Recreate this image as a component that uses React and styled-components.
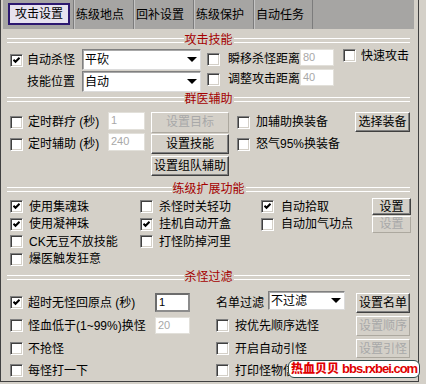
import styled, { createGlobalStyle } from 'styled-components'

const GlobalStyle = createGlobalStyle`
  body {
    margin: 0;
    background: #d4d0c8;
    font-family: 'Liberation Sans', 'Noto Sans CJK SC', sans-serif;
    font-size: 12px;
    line-height: 14px;
    color: #000;
  }
`

const Frame = styled.div`
  position: relative;
  box-sizing: border-box;
  width: 419px;
  height: 382px;
  border: 1px solid #404040;
  border-top: none;
  display: flex;
  flex-direction: column;
`

const TabBar = styled.div`
  display: flex;
  height: 29px;
  margin: 0 4px 0 2px;
  padding-left: 5px;
  background: #a6a5a3;
`

const ActiveTab = styled.div`
  box-sizing: border-box;
  width: 62px;
  height: 22px;
  margin: 3px 3px 0 0;
  border: 2px solid #2c1870;
  background: #e6e2ef;
  display: flex;
  align-items: center;
  justify-content: center;
`

const Tab = styled.div`
  box-sizing: border-box;
  width: 60px;
  padding-left: 2px;
  border-left: 1px solid #7c7c7c;
  box-shadow: inset 1px 0 #c4c4c4;
  display: flex;
  align-items: center;
  white-space: nowrap;

  &:last-child {
    border-right: 1px solid #7c7c7c;
  }
`

const Body = styled.div`
  display: flex;
  flex-direction: column;
  padding: 0 8px 0 6px;
`

const Header = styled.div`
  display: flex;
  align-items: center;
  height: 14px;
  margin-top: ${(p) => p.$mt || 0}px;
  color: #a40000;

  span {
    padding: 0 1px;
    white-space: nowrap;
  }
`

const HeaderLine = styled.div`
  flex: 1;
  box-sizing: border-box;
  height: 5px;
  border-top: 1px solid #fff;
  border-bottom: 1px solid #fff;
`

const Split = styled.div`
  display: flex;
  margin-top: ${(p) => p.$mt || 0}px;
`

const FieldGrid = styled.div`
  display: grid;
  grid-template-columns: ${(p) => p.$cols};
  grid-template-rows: ${(p) => p.$rows};
  align-items: center;
  margin-top: ${(p) => p.$mt || 0}px;
`

const Label = styled.span`
  white-space: nowrap;
  align-self: ${(p) => p.$self || 'center'};
  grid-column: span ${(p) => p.$span || 1};
`

const Box = styled.span`
  box-sizing: border-box;
  flex: none;
  width: 13px;
  height: 13px;
  margin-left: ${(p) => p.$ml || 0}px;
  align-self: ${(p) => p.$self || 'center'};
  background: #fff;
  border: 1px solid;
  border-color: #808080 #fff #fff #808080;
  box-shadow: inset 1px 1px #404040, inset -1px -1px #d4d0c8;
  display: flex;
  align-items: center;
  justify-content: center;
`

const Item = styled.span`
  display: flex;
  align-items: center;
  gap: ${(p) => p.$gap ?? 5}px;
  margin-left: ${(p) => p.$ml || 0}px;
  grid-column: span ${(p) => p.$span || 1};
  white-space: nowrap;
`

const SelectBox = styled.div`
  box-sizing: border-box;
  width: ${(p) => p.$w}px;
  height: ${(p) => p.$h}px;
  align-self: start;
  background: #fff;
  border: 1px solid;
  border-color: #808080 #dcdcdc #dcdcdc #808080;
  box-shadow: inset 1px 1px #a8a8a8;
  padding: 0 3px 0 2px;
  display: flex;
  align-items: center;
  justify-content: space-between;
  white-space: nowrap;
`

const NumInput = styled.div`
  box-sizing: border-box;
  width: ${(p) => p.$w}px;
  height: ${(p) => p.$h}px;
  align-self: ${(p) => p.$self || 'center'};
  margin-top: ${(p) => p.$mt || 0}px;
  padding: 1px 2px 0;
  background: #fff;
  font-size: 11px;
  line-height: 13px;
  color: ${(p) => (p.$off ? '#a8a8a8' : '#000')};
  border: ${(p) => (p.$off ? '1px solid #e2e0da' : '2px solid')};
  border-color: ${(p) => (p.$off ? '#e2e0da' : '#6c6c6c #8c8c8c #8c8c8c #6c6c6c')};
`

const Button = styled.button`
  box-sizing: border-box;
  width: ${(p) => p.$w}px;
  height: ${(p) => p.$h}px;
  padding: 0;
  font: inherit;
  color: #000;
  background: #d4d0c8;
  border: 1px solid;
  border-color: #fff #404040 #404040 #fff;
  box-shadow: inset -1px -1px #808080;
  white-space: nowrap;
  display: flex;
  align-items: center;
  justify-content: center;

  &:disabled {
    color: #a8a8a8;
    border-color: #fff #aca89f #aca89f #fff;
    box-shadow: none;
  }
`

const Watermark = styled.div`
  position: absolute;
  left: 287px;
  top: 360px;
  box-sizing: border-box;
  width: 132px;
  height: 18px;
  padding-left: 2px;
  background: #fff;
  border: 1px solid #2d4b4b;
  border-radius: 6px;
  display: flex;
  align-items: center;
  gap: 3px;
  color: #e00000;
  font-weight: bold;
  white-space: nowrap;

  b:last-child {
    font-size: 13px;
    letter-spacing: -1px;
  }
`

function Check({ checked, ml, self }) {
  return (
    <Box $ml={ml} $self={self}>
      {checked && (
        <svg width="7" height="7" viewBox="0 0 7 7">
          <polyline points="0.5,2.8 2.5,4.8 6.5,0.8" fill="none" stroke="#000" strokeWidth="2" />
        </svg>
      )}
    </Box>
  )
}

function CheckItem({ checked, ml, gap, span, children }) {
  return (
    <Item $ml={ml} $gap={gap} $span={span}>
      <Check checked={checked} />
      {children}
    </Item>
  )
}

function Select({ w, h, children }) {
  return (
    <SelectBox $w={w} $h={h}>
      <span>{children}</span>
      <svg width="10" height="5" viewBox="0 0 10 5">
        <polygon points="0,0 10,0 5,5" fill="#000" />
      </svg>
    </SelectBox>
  )
}

function SectionTitle({ mt, children }) {
  return (
    <Header $mt={mt}>
      <HeaderLine />
      <span>{children}</span>
      <HeaderLine />
    </Header>
  )
}

export default function App() {
  return (
    <>
      <GlobalStyle />
      <Frame>
        <TabBar>
          <ActiveTab>攻击设置</ActiveTab>
          <Tab>练级地点</Tab>
          <Tab>回补设置</Tab>
          <Tab>练级保护</Tab>
          <Tab>自动任务</Tab>
        </TabBar>
        <Body>
          <SectionTitle mt={4}>攻击技能</SectionTitle>
          <Split $mt={2}>
            <FieldGrid $cols="20px 55px 119px" $rows="22px 21px">
              <Check checked ml={3} />
              <Label>自动杀怪</Label>
              <Select w={119} h={21}>平砍</Select>
              <span />
              <Label>技能位置</Label>
              <Select w={119} h={21}>自动</Select>
            </FieldGrid>
            <FieldGrid $cols="27px 72px 34px 27px auto" $rows="20px 20px">
              <Check ml={6} />
              <Label>瞬移杀怪距离</Label>
              <NumInput $off $w={34} $h={17} $self="start">80</NumInput>
              <Check ml={9} self="start" />
              <Label $self="start">快速攻击</Label>
              <Check ml={6} />
              <Label>调整攻击距离</Label>
              <NumInput $off $w={34} $h={17} $self="start">40</NumInput>
            </FieldGrid>
          </Split>

          <SectionTitle>群医辅助</SectionTitle>
          <FieldGrid $cols="21px 80px 43px 86px 19px 99px 55px" $rows="22px 22px 21px" $mt={5}>
            <Check ml={3} />
            <Label>定时群疗 (秒)</Label>
            <NumInput $off $w={37} $h={18} $self="start" $mt={1}>1</NumInput>
            <Button $w={78} $h={21} disabled>设置目标</Button>
            <Check />
            <Label>加辅助换装备</Label>
            <Button $w={55} $h={20}>选择装备</Button>

            <Check ml={3} />
            <Label>定时辅助 (秒)</Label>
            <NumInput $off $w={37} $h={18} $self="start" $mt={0}>240</NumInput>
            <Button $w={78} $h={20}>设置技能</Button>
            <Check />
            <Label>怒气95%换装备</Label>
            <span />

            <span />
            <span />
            <span />
            <Button $w={78} $h={20}>设置组队辅助</Button>
          </FieldGrid>

          <SectionTitle mt={6}>练级扩展功能</SectionTitle>
          <FieldGrid $cols="133px 121px 111px 39px" $rows="repeat(4, 17.5px)" $mt={2}>
            <CheckItem checked ml={3} gap={6}>使用集魂珠</CheckItem>
            <CheckItem gap={6}>杀怪时关轻功</CheckItem>
            <CheckItem checked gap={7}>自动拾取</CheckItem>
            <Button $w={39} $h={17}>设置</Button>

            <CheckItem checked ml={3} gap={6}>使用凝神珠</CheckItem>
            <CheckItem checked gap={6}>挂机自动开盒</CheckItem>
            <CheckItem gap={7}>自动加气功点</CheckItem>
            <Button $w={39} $h={17} disabled>设置</Button>

            <CheckItem ml={3} gap={6}>CK无豆不放技能</CheckItem>
            <CheckItem gap={6}>打怪防掉河里</CheckItem>
            <span />
            <span />

            <CheckItem ml={3} gap={6}>爆医触发狂意</CheckItem>
          </FieldGrid>

          <SectionTitle mt={2}>杀怪过滤</SectionTitle>
          <FieldGrid $cols="148px 61px 52px 88px 54px" $rows="23px 23px 23px 21px" $mt={7}>
            <CheckItem checked ml={3}>超时无怪回原点 (秒)</CheckItem>
            <NumInput $w={35} $h={19}>1</NumInput>
            <Label>名单过滤</Label>
            <Select w={77} h={19}>不过滤</Select>
            <Button $w={54} $h={20}>设置名单</Button>

            <CheckItem ml={3}>怪血低于(1~99%)换怪</CheckItem>
            <NumInput $off $w={35} $h={17}>20</NumInput>
            <CheckItem span={2} gap={6}>按优先顺序选怪</CheckItem>
            <Button $w={54} $h={20} disabled>设置顺序</Button>

            <CheckItem ml={3}>不抢怪</CheckItem>
            <span />
            <CheckItem span={2} gap={6}>开启自动引怪</CheckItem>
            <Button $w={54} $h={19} disabled>设置引怪</Button>

            <CheckItem ml={3}>每怪打一下</CheckItem>
            <span />
            <CheckItem span={2} gap={6}>打印怪物信息</CheckItem>
          </FieldGrid>
        </Body>
        <Watermark>
          <b>热血贝贝</b>
          <b>bbs.rxbei.com</b>
        </Watermark>
      </Frame>
    </>
  )
}
